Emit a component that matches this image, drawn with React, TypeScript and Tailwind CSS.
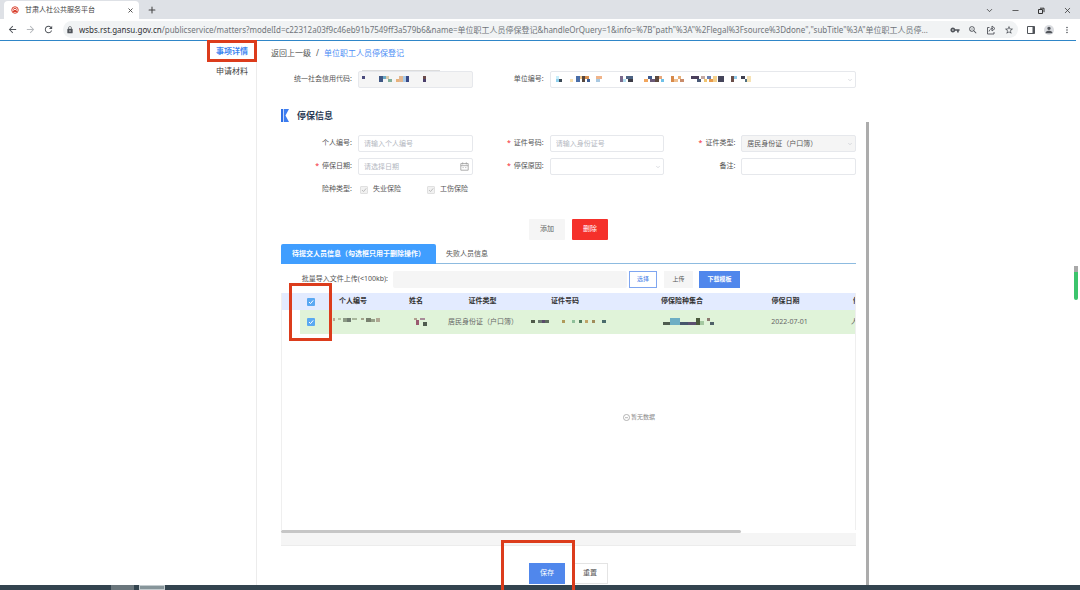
import type { ReactNode } from "react";
import {
  MdArrowBack,
  MdArrowForward,
  MdLock,
  MdMoreVert,
  MdPerson,
  MdRefresh,
  MdStarBorder,
  MdVpnKey,
  MdZoomOut,
} from "react-icons/md";
import { ChevronDown, Minus, Plus, X } from "lucide-react";

type Block = [x: number, y: number, w: number, h: number, color: string];

const creditCodeBlocks: Block[] = [
  [0, 0, 3, 3, "#4a4a7c"],
  [17, 0, 4, 6, "#3f5784"],
  [21, 0, 3, 3, "#6ba9c4"],
  [24, 0, 3, 3, "#d9c9a8"],
  [26, 3, 4, 3, "#7fae9b"],
  [34, 3, 4, 3, "#e8b27c"],
  [37, 0, 4, 6, "#e2b791"],
  [41, 0, 3, 6, "#a9cbe8"],
  [44, 0, 3, 6, "#3a4a86"],
  [61, 0, 3, 3, "#6b4a4a"],
  [61, 3, 3, 3, "#4a3f6b"],
];

const companyBlocks: Block[] = [
  [0, 0, 3, 3, "#c9eefa"],
  [3, 3, 3, 3, "#3c4a56"],
  [0, 3, 3, 3, "#8fd0ee"],
  [14, 3, 3, 3, "#f7dfb0"],
  [20, 0, 4, 6, "#4a6ea8"],
  [24, 0, 4, 3, "#f0c68c"],
  [26, 0, 3, 6, "#56473f"],
  [29, 0, 4, 3, "#d98f4e"],
  [31, 3, 3, 3, "#3f5f96"],
  [40, 0, 6, 3, "#f0b48a"],
  [40, 3, 4, 3, "#a9c9e2"],
  [64, 0, 3, 6, "#7a6a8c"],
  [70, 0, 7, 3, "#4d6484"],
  [72, 3, 5, 3, "#3c3c46"],
  [67, 3, 3, 3, "#b4e2f2"],
  [88, 3, 4, 3, "#f2a65e"],
  [92, 0, 4, 3, "#3f5a8c"],
  [94, 3, 5, 3, "#6b5a78"],
  [99, 0, 4, 6, "#5c4a3f"],
  [103, 0, 3, 3, "#e8a87c"],
  [105, 3, 3, 3, "#6ec1e8"],
  [115, 0, 3, 6, "#d88a4a"],
  [118, 3, 4, 3, "#f0c090"],
  [122, 0, 3, 3, "#e8b078"],
  [124, 3, 4, 3, "#c98c6b"],
  [135, 0, 8, 3, "#4a3f5c"],
  [141, 3, 4, 3, "#4a5a78"],
  [145, 0, 4, 3, "#c4a8a0"],
  [148, 3, 3, 3, "#f0c46e"],
  [151, 0, 4, 3, "#6b7fae"],
  [153, 3, 4, 3, "#e89a4a"],
  [157, 0, 4, 6, "#f4d08c"],
  [162, 0, 6, 6, "#45455a"],
  [175, 0, 3, 6, "#6b4f4a"],
  [178, 0, 3, 3, "#8fc9ea"],
  [185, 0, 4, 3, "#3f3f4f"],
  [189, 3, 3, 3, "#4f6f7f"],
  [191, 0, 4, 6, "#f6e2b4"],
];

const personBlocks: Block[] = [
  [0, 0, 2, 3, "#b9a894"],
  [5, 0, 3, 2, "#b4c4a4"],
  [10, 0, 4, 4, "#8c9a84"],
  [14, 0, 4, 4, "#6f7a70"],
  [19, 0, 5, 2, "#a8b89c"],
  [28, 0, 3, 2, "#a4a48c"],
  [33, 0, 5, 4, "#78806f"],
  [38, 1, 4, 3, "#96a088"],
  [43, 0, 4, 4, "#b0a894"],
];

const nameBlocks: Block[] = [
  [0, 0, 3, 2, "#b0a090"],
  [2, 2, 3, 5, "#9a5a70"],
  [6, 0, 5, 2, "#a88c98"],
  [9, 4, 4, 4, "#4f5c4f"],
];

const idBlocks: Block[] = [
  [0, 0, 4, 3, "#4f5a4a"],
  [7, 0, 4, 3, "#6b7a70"],
  [11, 0, 3, 3, "#5a4a6b"],
  [14, 0, 4, 3, "#5c6b5c"],
  [31, 0, 3, 3, "#b09a5a"],
  [41, 0, 3, 3, "#8fc09a"],
  [48, 0, 3, 3, "#4f7a5c"],
  [54, 0, 3, 3, "#c0a468"],
  [61, 0, 3, 3, "#a08c5a"],
  [71, 0, 4, 3, "#4a6b6b"],
];

const insuranceBlocks: Block[] = [
  [0, 4, 7, 3, "#4f5c50"],
  [7, 0, 10, 7, "#6eaec4"],
  [17, 4, 8, 3, "#46566b"],
  [25, 4, 8, 3, "#5c5070"],
  [33, 0, 4, 7, "#4a5a3c"],
  [37, 3, 4, 4, "#a4c8a0"],
  [44, 0, 3, 3, "#8c7a70"],
  [47, 4, 4, 3, "#4f6068"],
];

function Mosaic({ blocks, width }: { blocks: Block[]; width: number }) {
  return (
    <svg width={width} height="8" shapeRendering="crispEdges" aria-hidden="true">
      {blocks.map(([x, y, w, h, color], i) => (
        <rect key={i} x={x} y={y} width={w} height={h} fill={color} />
      ))}
    </svg>
  );
}

const box =
  "block h-[17px] w-full rounded-[2px] border border-[#e6e8ec] px-[5px] text-[7px] leading-[15px] text-[#555] placeholder:text-[#b4b8bf]";

function Field({
  id,
  label,
  required,
  wide,
  children,
}: {
  id: string;
  label: string;
  required?: boolean;
  wide?: boolean;
  children: ReactNode;
}) {
  return (
    <div className={wide ? "col-span-2 flex items-center" : "flex items-center"}>
      <label htmlFor={id} className="mr-[6px] w-[71px] shrink-0 text-right whitespace-nowrap">
        {required && <span className="mr-[3px] text-[#f5222d]">*</span>}
        {label}:
      </label>
      <div className="relative min-w-0 flex-1">{children}</div>
    </div>
  );
}

function Arrow() {
  return (
    <ChevronDown
      size={6}
      className="pointer-events-none absolute top-[6px] right-[3px] text-[#b9bdc4]"
    />
  );
}

function Check({ label, muted }: { label: string; muted?: boolean }) {
  return (
    <span className="relative inline-block size-2 align-middle">
      <input
        type="checkbox"
        id={label}
        aria-label={label}
        defaultChecked
        disabled={muted}
        className={
          muted
            ? "block size-2 appearance-none rounded-[1px] border border-[#e0e0e0] bg-[#f1f1f1]"
            : "block size-2 appearance-none rounded-[1px] bg-[#5aa9f2]"
        }
      />
      <svg
        viewBox="0 0 8 8"
        className={
          muted
            ? "pointer-events-none absolute inset-0 size-2 text-[#bdbdbd]"
            : "pointer-events-none absolute inset-0 size-2 text-white"
        }
        fill="none"
        stroke="currentColor"
      >
        <path d="M2 4l1.5 1.6L6.2 2.4" />
      </svg>
    </span>
  );
}

function Browser() {
  return (
    <header>
      <div className="flex h-[19px] items-end justify-between bg-[#dee1e6]">
        <div className="flex items-center">
          <div className="ml-1 flex h-[18px] w-[135px] items-center rounded-t-[4px] bg-white pr-[5px] pl-[7px]">
            <svg viewBox="0 0 16 16" className="size-2 shrink-0" fill="none">
              <circle cx="8" cy="8" r="6.5" stroke="#d9412f" strokeWidth="2" />
              <path d="M4 7q4-5 8 0M4 11h8M5 9h6" stroke="#d9412f" strokeWidth="2" />
            </svg>
            <span className="ml-[6px] flex-1 text-[7px] text-[#444]">甘肃人社公共服务平台</span>
            <button aria-label="关闭标签页">
              <X size={7} strokeWidth={3} className="text-[#444]" />
            </button>
          </div>
          <button aria-label="新标签页" className="ml-2">
            <Plus size={10} strokeWidth={2.5} className="text-[#444]" />
          </button>
        </div>
        <div className="flex h-[17px] w-[104px] items-center text-[#333]">
          <button aria-label="搜索标签页" className="flex flex-1 justify-center">
            <ChevronDown size={9} />
          </button>
          <button aria-label="最小化" className="flex flex-1 justify-center">
            <Minus size={9} />
          </button>
          <button aria-label="还原" className="flex flex-1 justify-center">
            <svg viewBox="0 0 8 8" className="size-2" fill="none" stroke="currentColor">
              <path d="M1.5 2.5h4v4h-4zM3 1.2h4v4" />
            </svg>
          </button>
          <button aria-label="关闭" className="flex flex-1 justify-center">
            <X size={9} />
          </button>
        </div>
      </div>
      <div className="flex h-[21px] items-center bg-white pr-2 pl-[7px] text-[#50545a]">
        <button aria-label="后退"><MdArrowBack size={11} /></button>
        <button aria-label="前进" className="ml-[7px] text-[#b5b8bc]"><MdArrowForward size={11} /></button>
        <button aria-label="刷新" className="ml-[7px]"><MdRefresh size={11} /></button>
        <div className="ml-[9px] flex h-[17px] min-w-0 flex-1 items-center rounded-full bg-[#f1f3f4] pr-1 pl-[3px]">
          <MdLock size={8} className="shrink-0" />
          <div className="ml-[5px] min-w-0 flex-1 truncate text-[8px] text-[#70757a]">
            <span className="text-[#303134]">wsbs.rst.gansu.gov.cn</span>
            {'/publicservice/matters?modelId=c22312a03f9c46eb91b7549ff3a579b6&name=单位职工人员停保登记&handleOrQuery=1&info=%7B"path"%3A"%2Flegal%3Fsource%3Ddone","subTitle"%3A"单位职工人员停…'}
          </div>
          <div className="ml-[6px] flex shrink-0 items-center gap-2">
            <button aria-label="密码"><MdVpnKey size={10} /></button>
            <button aria-label="缩放"><MdZoomOut size={10} /></button>
            <button aria-label="分享">
              <svg viewBox="0 0 20 20" className="size-[10px]" fill="none" stroke="currentColor" strokeWidth="1.8">
                <path d="M7 5H3v13h13v-4M6 13c1-5 5-6 8-6M12 2l6 5-6 5z" />
              </svg>
            </button>
            <button aria-label="收藏"><MdStarBorder size={10} /></button>
          </div>
        </div>
        <div className="ml-2 flex shrink-0 items-center gap-2">
          <button aria-label="侧边栏">
            <svg viewBox="0 0 10 10" className="size-[10px]" fill="none" stroke="currentColor">
              <path d="M1.5 1.5h7v7h-7z" />
              <path d="M7.5 1.5v7" strokeWidth="2" />
            </svg>
          </button>
          <button aria-label="用户" className="rounded-full bg-[#dadce0]"><MdPerson size={10} /></button>
          <button aria-label="更多"><MdMoreVert size={10} /></button>
        </div>
      </div>
      <div className="mr-1 h-px bg-[#2f86c8]" />
    </header>
  );
}

function Sidebar() {
  return (
    <nav className="w-[257px] shrink-0 border-r border-[#ececec] pr-2 text-right text-[8px]">
      <div className="relative flex h-5 items-center justify-end">
        <a href="#detail" className="font-bold text-[#3d86f0]">事项详情</a>
        <div className="pointer-events-none absolute -top-px -right-[9px] h-[22px] w-[50px] border-3 border-[#dc3c1c]" />
      </div>
      <div className="flex h-5 items-center justify-end">
        <a href="#materials" className="text-[#444]">申请材料</a>
      </div>
    </nav>
  );
}

function PersonTable() {
  return (
    <div className="relative mt-[5px] flex min-h-0 flex-1 flex-col">
      <div className="min-h-0 flex-1 overflow-hidden border-x border-[#efefef]">
        <table className="w-full table-fixed text-center text-[7px] whitespace-nowrap">
          <colgroup>
            <col className="w-[18px]" />
            <col className="w-[22px]" />
            <col className="w-[62px]" />
            <col className="w-[64px]" />
            <col className="w-[69px]" />
            <col className="w-[96px]" />
            <col className="w-[138px]" />
            <col className="w-[69px]" />
            <col />
          </colgroup>
          <thead className="bg-[#e3ebff] text-[#333]">
            <tr className="h-[17px]">
              <th />
              <th className="leading-none"><Check label="全选" /></th>
              <th>个人编号</th>
              <th>姓名</th>
              <th>证件类型</th>
              <th>证件号码</th>
              <th>停保险种集合</th>
              <th>停保日期</th>
              <th className="overflow-hidden pl-[33px] text-left">停</th>
            </tr>
          </thead>
          <tbody className="text-[#666]">
            <tr className="h-6 bg-[#e0f3d9]">
              <td className="bg-white pr-[1px] text-center text-[#b06060]">1</td>
              <td className="leading-none"><Check label="选择第一行" /></td>
              <td><span className="flex justify-center pl-2"><Mosaic blocks={personBlocks} width={48} /></span></td>
              <td><span className="flex justify-center pl-[10px]"><Mosaic blocks={nameBlocks} width={14} /></span></td>
              <td>居民身份证（户口簿）</td>
              <td><span className="flex justify-center pt-[3px] pl-[7px]"><Mosaic blocks={idBlocks} width={75} /></span></td>
              <td><span className="flex justify-center pl-[14px]"><Mosaic blocks={insuranceBlocks} width={52} /></span></td>
              <td className="pl-2">2022-07-01</td>
              <td className="overflow-hidden pl-[31px] text-left">人</td>
            </tr>
          </tbody>
        </table>
      </div>
      <div className="pointer-events-none absolute top-[120px] left-[342px] flex items-center gap-px text-[6px] text-[#888]">
        <svg viewBox="0 0 8 8" className="size-[7px]" fill="none" stroke="currentColor" strokeWidth="0.7">
          <circle cx="4" cy="4" r="3.5" />
          <path d="M2.3 4.2h3.4" />
        </svg>
        暂无数据
      </div>
      <div className="h-[3px] w-4/5 rounded-full bg-[#c6c6c6]" />
      <div className="h-[13px] border-b border-[#ececec] bg-[#f5f5f5]" />
      <div className="pointer-events-none absolute -top-[10px] left-2 h-[58px] w-[43px] border-3 border-[#dc3c1c]" />
    </div>
  );
}

export default function App() {
  return (
    <div className="flex h-screen flex-col overflow-hidden bg-white font-['Noto_Sans','Noto_Sans_CJK_SC',sans-serif] text-[7px] text-[#555]">
      <Browser />
      <div className="flex min-h-0 flex-1">
        <Sidebar />
        <main className="flex min-w-0 flex-1 flex-col">
          <div className="flex h-6 shrink-0 items-center gap-[5px] pl-[14px] text-[8px]">
            <a href="#back" className="text-[#555]">返回上一级</a>
            <span>/</span>
            <a href="#current" className="text-[#4a8cf5]">单位职工人员停保登记</a>
          </div>
          <div className="flex min-h-0 flex-1 flex-col pt-[6px] pl-6">
            <div className="grid shrink-0 grid-cols-3">
              <Field id="credit" label="统一社会信用代码">
                <input id="credit" disabled className={`${box} bg-[#f5f5f5]`} />
                <span className="pointer-events-none absolute top-[5px] left-1">
                  <Mosaic blocks={creditCodeBlocks} width={66} />
                </span>
                <span className="absolute -top-px left-1 h-px w-[78px] bg-[#dcdcdc]" />
              </Field>
              <Field id="company" label="单位编号" wide>
                <select id="company" className={`${box} appearance-none`} />
                <span className="pointer-events-none absolute top-[5px] left-[6px]">
                  <Mosaic blocks={companyBlocks} width={196} />
                </span>
                <Arrow />
              </Field>
            </div>

            <div className="mt-[19px] flex h-[17px] shrink-0 items-center gap-2">
              <svg viewBox="0 0 8 13" className="h-[13px] w-2">
                <path d="M0 0h2v13H0z" fill="#2f6fe4" />
                <path d="M2.7 0H8L4.5 6.5 8 13H2.7z" fill="#3d7df0" />
              </svg>
              <h2 className="text-[9px] font-bold text-[#2a3a55]">停保信息</h2>
            </div>

            <div className="mt-[11px] grid shrink-0 grid-cols-3 gap-y-[6px]">
              <Field id="person" label="个人编号">
                <input id="person" placeholder="请输入个人编号" className={box} />
              </Field>
              <Field id="idno" label="证件号码" required>
                <input id="idno" placeholder="请输入身份证号" className={box} />
              </Field>
              <Field id="idtype" label="证件类型" required>
                <select id="idtype" disabled className={`${box} appearance-none bg-[#f5f5f5] opacity-100`}>
                  <option>居民身份证（户口簿）</option>
                </select>
                <Arrow />
              </Field>
              <Field id="date" label="停保日期" required>
                <input id="date" placeholder="请选择日期" className={box} />
                <svg viewBox="0 0 9 9" className="absolute top-1 right-1 size-[9px] text-[#999]" fill="none" stroke="currentColor" strokeWidth="0.8">
                  <path d="M.8 1.6h7.4v6.6H.8zM.8 3.7h7.4M2.7.4v2M6.3.4v2M2.6 5.6h1M5.3 5.6h1" />
                </svg>
              </Field>
              <Field id="reason" label="停保原因" required>
                <select id="reason" className={`${box} appearance-none`} />
                <Arrow />
              </Field>
              <Field id="remark" label="备注">
                <input id="remark" className={box} />
              </Field>
              <div className="col-span-2 flex h-[17px] items-center">
                <span className="mr-2 w-[71px] text-right">险种类型:</span>
                <label className="flex w-[67px] items-center gap-[5px]" htmlFor="失业保险">
                  <Check label="失业保险" muted />
                  失业保险
                </label>
                <label className="flex items-center gap-[5px]" htmlFor="工伤保险">
                  <Check label="工伤保险" muted />
                  工伤保险
                </label>
              </div>
            </div>

            <div className="mt-[21px] flex shrink-0 justify-center gap-[7px]">
              <button className="h-[21px] w-9 rounded-[1px] bg-[#f5f5f5] text-[#666]">添加</button>
              <button className="h-[21px] w-9 rounded-[1px] bg-[#f5302a] text-white">删除</button>
            </div>

            <div role="tablist" className="mt-1 flex h-5 shrink-0 border-b border-[#8dbbe0]">
              <button role="tab" aria-selected="true" className="-mb-px w-[155px] rounded-t-[2px] bg-[#409eff] pt-px font-bold whitespace-nowrap text-white">
                待提交人员信息（勾选框只用于删除操作）
              </button>
              <button role="tab" aria-selected="false" className="ml-[10px] pt-[2px]">失败人员信息</button>
            </div>

            <div className="mt-[7px] flex h-[17px] shrink-0 items-center">
              <label htmlFor="file" className="w-[112px] shrink-0 pr-[5px] text-right whitespace-nowrap">批量导入文件上传(&lt;100kb):</label>
              <input id="file" readOnly className="h-[17px] w-[234px] rounded-[2px] bg-[#f5f5f5]" />
              <button className="ml-[2px] h-[17px] w-7 border border-[#7fa6f0] text-[6px] text-[#4a7fe8]">选择</button>
              <button className="ml-[7px] h-[17px] w-[29px] bg-[#f5f5f5] text-[6px]">上传</button>
              <button className="ml-[6px] h-[17px] w-[41px] bg-[#5087ec] text-[6px] font-bold text-white">下载模板</button>
            </div>

            <PersonTable />

            <div className="mt-[17px] mb-px flex shrink-0 justify-center gap-[7px]">
              <div className="relative">
                <button className="h-[21px] w-9 bg-[#5087ec] text-white">保存</button>
                <div className="pointer-events-none absolute -top-[23px] -left-7 h-[60px] w-[74px] border-3 border-[#dc3c1c]" />
              </div>
              <button className="h-[21px] w-9 border border-[#e4e4e4]">重置</button>
            </div>
          </div>
        </main>
        <div className="mt-[81px] ml-[10px] w-[3px] shrink-0 bg-[#acacac]" />
        <aside className="flex w-[211px] shrink-0 justify-end pr-[2px]">
          <div className="mt-[225px] flex h-[34px] w-1 flex-col">
            <div className="h-[6px] bg-[#a8a8a8]" />
            <div className="flex-1 rounded-b-[2px] bg-[#3cc46c]" />
          </div>
        </aside>
      </div>
      <footer className="flex h-[5px] shrink-0 bg-[#33444f] pl-[111px]">
        <div className="w-[23px] bg-[#6a767c]" />
        <div className="ml-[5px] w-[26px] border border-[#c4cccf] bg-[#87959a]" />
      </footer>
    </div>
  );
}
